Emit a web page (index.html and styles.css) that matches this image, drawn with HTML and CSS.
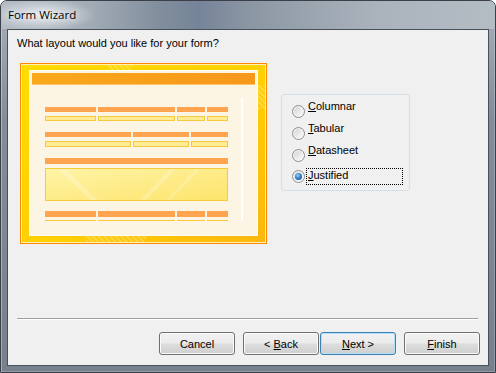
FILE: index.html
```html
<!DOCTYPE html>
<html lang="en">
<head>
    <title>Form Wizard</title>
    <link rel="stylesheet" href="styles.css">
</head>
<body>
    <div class="window">
        <div class="titlebar">Form Wizard</div>

        <div class="client">
            <p class="question">What layout would you like for your form?</p>

            <div class="layout">
                <svg class="preview" width="247" height="181" viewBox="0 0 247 181">
                    <defs>
                        <linearGradient id="gold" x1="0" y1="0" x2="1" y2="1">
                            <stop offset="0" stop-color="#ffdc00"/>
                            <stop offset="0.55" stop-color="#ffcf02"/>
                            <stop offset="1" stop-color="#fbb70e"/>
                        </linearGradient>
                        <linearGradient id="bar" x1="0" y1="0" x2="1" y2="0">
                            <stop offset="0" stop-color="#f9a91b"/>
                            <stop offset="1" stop-color="#f7971b"/>
                        </linearGradient>
                        <linearGradient id="well" x1="0" y1="0" x2="1" y2="1">
                            <stop offset="0" stop-color="#fff4a8"/>
                            <stop offset="1" stop-color="#fde46b"/>
                        </linearGradient>
                        <pattern id="hatch" width="4" height="4" patternUnits="userSpaceOnUse" patternTransform="rotate(-45)">
                            <rect width="2" height="4" fill="#ffffff" opacity="0.25"/>
                        </pattern>
                    </defs>
                    <!-- frame -->
                    <rect x="0.5" y="0.5" width="246" height="180" fill="#fff2b8" stroke="#ff8800"/>
                    <rect x="2" y="2" width="243" height="177" fill="url(#gold)"/>
                    <rect x="88" y="2" width="24" height="5" fill="url(#hatch)"/>
                    <rect x="66" y="173" width="60" height="6" fill="url(#hatch)"/>
                    <rect x="238" y="22" width="7" height="24" fill="url(#hatch)"/>
                    <!-- page -->
                    <rect x="9" y="7" width="229" height="166" fill="#fffef6"/>
                    <rect x="10" y="8" width="227" height="164" fill="#fdf5e3"/>
                    <rect x="12" y="10" width="223" height="12" fill="url(#bar)"/>
                    <rect x="12" y="21" width="223" height="1" fill="#fbc46c"/>
                    <!-- labels -->
                    <g fill="#ffa54f">
                        <rect x="25" y="44" width="51" height="5"/>
                        <rect x="78" y="44" width="77" height="5"/>
                        <rect x="157" y="44" width="28" height="5"/>
                        <rect x="187" y="44" width="21" height="5"/>
                        <rect x="25" y="69" width="86" height="5"/>
                        <rect x="113" y="69" width="56" height="5"/>
                        <rect x="171" y="69" width="37" height="5"/>
                        <rect x="25" y="95" width="183" height="6"/>
                        <rect x="25" y="148" width="51" height="6"/>
                        <rect x="78" y="148" width="77" height="6"/>
                        <rect x="157" y="148" width="28" height="6"/>
                        <rect x="187" y="148" width="21" height="6"/>
                    </g>
                    <!-- fields -->
                    <g fill="#feeb93" stroke="#f9c93c">
                        <rect x="25.5" y="53.5" width="50" height="4"/>
                        <rect x="78.5" y="53.5" width="76" height="4"/>
                        <rect x="157.5" y="53.5" width="27" height="4"/>
                        <rect x="187.5" y="53.5" width="20" height="4"/>
                        <rect x="25.5" y="78.5" width="85" height="5"/>
                        <rect x="113.5" y="78.5" width="55" height="5"/>
                        <rect x="171.5" y="78.5" width="36" height="5"/>
                        <rect x="25.5" y="105.5" width="182" height="32" fill="url(#well)"/>
                    </g>
                    <g fill="#ffffff" opacity="0.22">
                        <polygon points="38,106 46,106 78,137 70,137"/>
                        <polygon points="150,106 156,106 126,137 120,137"/>
                        <polygon points="176,106 180,106 150,137 146,137"/>
                    </g>
                    <g fill="#f9c93c">
                        <rect x="25" y="157" width="51" height="1"/>
                        <rect x="78" y="157" width="77" height="1"/>
                        <rect x="157" y="157" width="28" height="1"/>
                        <rect x="187" y="157" width="21" height="1"/>
                    </g>
                    <rect x="221" y="35" width="2" height="123" fill="#ffffff"/>
                </svg>

                <div class="choices">
                    <div class="option">
                        <span class="radio"></span>
                        <span class="label"><u>C</u>olumnar</span>
                    </div>
                    <div class="option">
                        <span class="radio"></span>
                        <span class="label"><u>T</u>abular</span>
                    </div>
                    <div class="option">
                        <span class="radio"></span>
                        <span class="label"><u>D</u>atasheet</span>
                    </div>
                    <div class="option selected">
                        <span class="radio"></span>
                        <span class="label"><u>J</u>ustified</span>
                    </div>
                </div>
            </div>

            <div class="separator"></div>

            <div class="buttons">
                <button class="btn">Cancel</button>
                <button class="btn back">&lt; <u>B</u>ack</button>
                <button class="btn default"><u>N</u>ext &gt;</button>
                <button class="btn"><u>F</u>inish</button>
            </div>
        </div>
    </div>
</body>
</html>
```

FILE: styles.css
```css
body {
    margin: 0;
    background: #ffffff;
    font-family: "Liberation Sans", Arial, sans-serif;
    font-size: 11px;
    color: #000000;
}
.window {
    width: 496px;
    height: 373px;
    box-sizing: border-box;
    display: flex;
    flex-direction: column;
    padding: 0 6px 6px;
    border: 1px solid #3b4048;
    border-radius: 7px 7px 0 0;
    background: linear-gradient(#a7b0ba, #838d99 120px, #77818d);
    box-shadow: inset 1px 0 0 rgba(255, 255, 255, 0.35), inset -1px -1px 0 rgba(255, 255, 255, 0.2);
}
.titlebar {
    height: 28px;
    margin: 0 -6px;
    padding-left: 7px;
    border-radius: 6px 6px 0 0;
    font-family: "Open Sans", "Noto Sans", sans-serif;
    font-size: 11.5px;
    line-height: 27px;
    text-shadow: 0 0 6px rgba(255, 255, 255, 0.9);
    background:
        radial-gradient(ellipse 52px 16px at 42px 14px, rgba(236, 240, 244, 0.95), rgba(236, 240, 244, 0)),
        linear-gradient(to right, #b4bcc5 0%, #a2acb7 18%, #818e9c 32%, #76849a 40%, #8b96a3 50%, #9aa4af 62%, #aab3bc 76%, #b4bcc4 100%);
}
.client {
    flex: 1;
    display: flex;
    flex-direction: column;
    border: 1px solid #48505a;
    background: #f0f0f0;
    padding-bottom: 10px;
}
.question {
    margin: 0;
    padding: 7px 0 0 9px;
    line-height: 13px;
}
.layout {
    display: flex;
    align-items: flex-start;
    margin-top: 13px;
    padding-left: 12px;
}
.preview {
    display: block;
}
.choices {
    width: 129px;
    height: 97px;
    box-sizing: border-box;
    margin: 31px 0 0 14px;
    padding: 5px 0 0 10px;
    border: 1px solid #d5dfe5;
    border-radius: 3px;
}
.option {
    display: flex;
    align-items: flex-start;
    height: 22px;
}
.radio {
    position: relative;
    width: 13px;
    height: 13px;
    box-sizing: border-box;
    margin-top: 5px;
    border: 1px solid #8e8f8f;
    border-radius: 50%;
    background: linear-gradient(135deg, #cfcfcf, #f2f2f2 70%, #fbfbfb);
    box-shadow: inset 0 0 0 1px #f6f6f6;
}
.label {
    margin-left: 3px;
    line-height: 13px;
}
.option.selected {
    margin-top: 2px;
}
.option.selected .radio {
    margin-top: 2px;
}
.option.selected .radio::after {
    content: "";
    position: absolute;
    left: 2px;
    top: 2px;
    width: 7px;
    height: 7px;
    border-radius: 50%;
    background: radial-gradient(circle at 40% 35%, #8fd0ff, #2a74c4 55%, #0d3f84);
}
.option.selected .label {
    width: 97px;
    height: 17px;
    box-sizing: border-box;
    margin-left: 1px;
    padding: 0 0 2px 1px;
    border: 1px dotted #000000;
}
.separator {
    margin: auto 10px 0 9px;
    border-top: 1px solid #a0a0a0;
    border-bottom: 1px solid #ffffff;
}
.buttons {
    display: flex;
    justify-content: flex-end;
    gap: 8px;
    margin-top: 12px;
    padding-right: 8px;
}
.btn {
    width: 76px;
    height: 23px;
    box-sizing: border-box;
    padding: 0;
    border: 1px solid #707070;
    border-radius: 3px;
    font-family: "Liberation Sans", Arial, sans-serif;
    font-size: 11px;
    color: #000000;
    background: linear-gradient(#f2f2f2 0%, #ebebeb 48%, #dddddd 52%, #cfcfcf 100%);
    box-shadow: inset 0 0 0 1px #fbfbfb;
}
.btn.back {
    margin-right: -7px;
}
.btn.default {
    border-color: #3c7fb1;
    box-shadow: inset 0 0 0 1px #b2e1fa;
}
```
